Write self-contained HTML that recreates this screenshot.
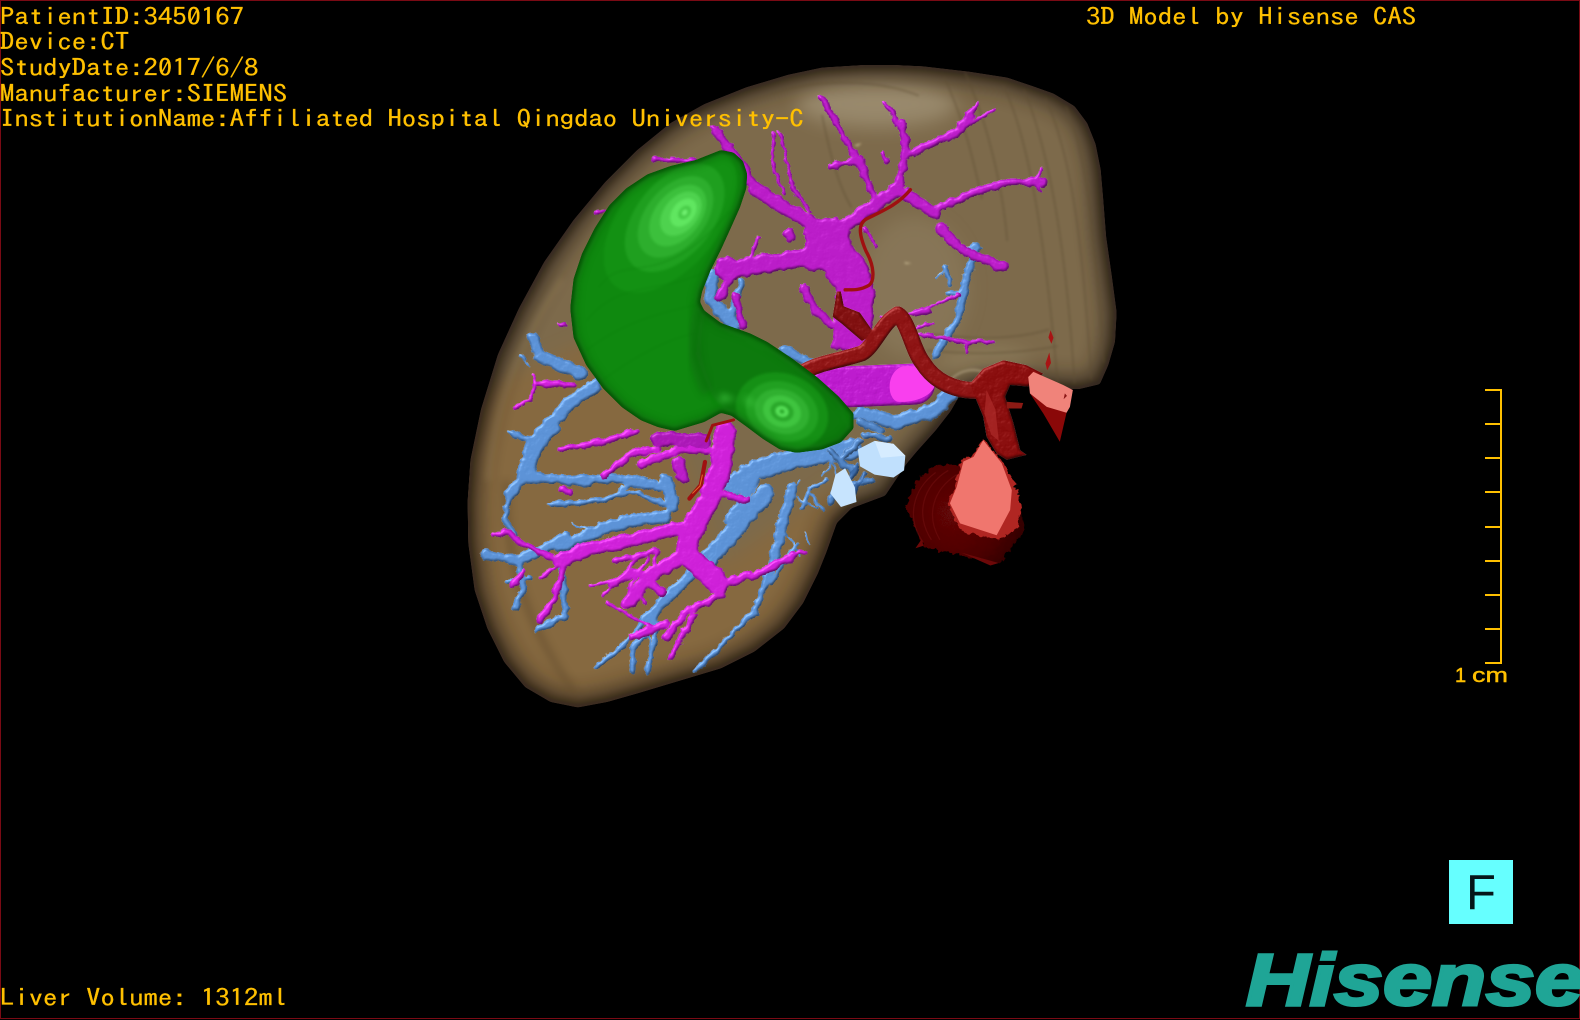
<!DOCTYPE html>
<html><head><meta charset="utf-8"><title>3D Model</title>
<style>
html,body{margin:0;padding:0;background:#000;width:1580px;height:1020px;overflow:hidden}
svg{position:absolute;left:0;top:0}
.t{position:absolute;left:0;white-space:pre;font-family:"IPAGothic","Liberation Mono",monospace;font-size:24px;line-height:26px;color:#ffc000;-webkit-text-stroke:.25px #ffc000;transform-origin:0 0;transform:scaleX(1.196)}
</style></head><body>
<svg width="1580" height="1020" viewBox="0 0 1580 1020" xmlns="http://www.w3.org/2000/svg">
<defs>
<filter id="smooth" x="-5%" y="-5%" width="110%" height="110%" color-interpolation-filters="sRGB">
<feGaussianBlur stdDeviation="3"/><feComponentTransfer><feFuncA type="linear" slope="9" intercept="-4"/></feComponentTransfer>
</filter>
<filter id="b20" x="-40%" y="-40%" width="180%" height="180%"><feGaussianBlur stdDeviation="22"/></filter>
<filter id="b8" x="-40%" y="-40%" width="180%" height="180%"><feGaussianBlur stdDeviation="8"/></filter>
<filter id="b3" x="-40%" y="-40%" width="180%" height="180%"><feGaussianBlur stdDeviation="3"/></filter>
<filter id="rough" x="-10%" y="-10%" width="120%" height="120%"><feTurbulence type="fractalNoise" baseFrequency=".09" numOctaves="2" seed="8"/><feDisplacementMap in="SourceGraphic" scale="16" xChannelSelector="R" yChannelSelector="G"/></filter>
<filter id="tube" filterUnits="userSpaceOnUse" x="0" y="0" width="1568" height="1568" color-interpolation-filters="sRGB">
<feTurbulence type="fractalNoise" baseFrequency=".045" numOctaves="3" seed="4" result="n"/>
<feDisplacementMap in="SourceGraphic" in2="n" scale="16" xChannelSelector="R" yChannelSelector="G" result="d"/>
<feGaussianBlur in="d" stdDeviation="3.5" result="b0"/>
<feComposite in="b0" in2="n" operator="arithmetic" k1=".25" k2=".85" k3="0" k4="0" result="b"/>
<feDiffuseLighting in="b" surfaceScale="5" diffuseConstant="1.1" lighting-color="#fff" result="dl"><feDistantLight azimuth="235" elevation="72"/></feDiffuseLighting>
<feBlend in="d" in2="dl" mode="multiply" result="m"/>
<feSpecularLighting in="b" surfaceScale="5" specularConstant=".5" specularExponent="26" lighting-color="#fff" result="s"><feDistantLight azimuth="235" elevation="36"/></feSpecularLighting>
<feComposite in="m" in2="s" operator="arithmetic" k1="0" k2="1" k3=".5" k4="0" result="a"/>
<feComposite in="a" in2="d" operator="in"/>
</filter>
<filter id="tube2" filterUnits="userSpaceOnUse" x="0" y="0" width="1568" height="1568" color-interpolation-filters="sRGB">
<feTurbulence type="fractalNoise" baseFrequency=".05" numOctaves="3" seed="9" result="n"/>
<feGaussianBlur in="SourceGraphic" stdDeviation="3.5" result="b0"/>
<feComposite in="b0" in2="n" operator="arithmetic" k1=".3" k2=".82" k3="0" k4="0" result="b"/>
<feDiffuseLighting in="b" surfaceScale="5" diffuseConstant="1.1" lighting-color="#fff" result="dl"><feDistantLight azimuth="235" elevation="72"/></feDiffuseLighting>
<feBlend in="SourceGraphic" in2="dl" mode="multiply" result="m"/>
<feSpecularLighting in="b" surfaceScale="5" specularConstant=".5" specularExponent="22" lighting-color="#fff" result="s"><feDistantLight azimuth="235" elevation="36"/></feSpecularLighting>
<feComposite in="m" in2="s" operator="arithmetic" k1="0" k2="1" k3=".5" k4="0" result="a"/>
<feComposite in="a" in2="SourceGraphic" operator="in"/>
</filter>
<path id="lv" d="M960 12L1030 12L1100 15L1210 28L1300 42L1360 62L1410 80L1460 110L1490 150L1510 200L1522 260L1528 330L1535 420L1548 510L1560 600L1556 670L1540 725L1520 770L1470 782L1430 780L1340 770L1240 770L1190 792L1165 835L1130 880L1085 930L1060 960L1010 1035L930 1065L895 1100L870 1170L850 1220L815 1290L770 1350L700 1405L620 1445L520 1475L420 1505L350 1525L280 1538L215 1525L155 1490L105 1430L65 1350L35 1260L20 1150L18 1050L25 950L50 830L90 700L140 590L200 480L270 380L345 290L420 215L500 150L580 105L680 65L780 35L860 18Z"/>
<path id="gb" d="M620 214L650 220L672 240L682 270L680 305L665 350L645 395L620 450L595 500L575 550L570 575L580 595L620 625L690 650L730 670L790 710L850 755L900 800L935 840L935 875L905 908L860 925L800 933L760 925L720 900L680 870L645 845L620 838L580 860L510 881L470 872L430 856L385 825L340 780L300 725L270 660L262 590L270 520L290 460L320 400L355 345L395 305L445 272L500 252L560 238Z"/>
<clipPath id="lvc"><use href="#lv"/></clipPath>
<clipPath id="gbc"><use href="#gb"/></clipPath>
<radialGradient id="ball" gradientUnits="userSpaceOnUse" cx="1170" cy="1075" r="165">
<stop offset="0" stop-color="#620707"/><stop offset=".7" stop-color="#4c0404"/><stop offset="1" stop-color="#360202"/></radialGradient>
</defs>

<g transform="translate(460 60) scale(.42092)">
<!-- liver -->
<g filter="url(#smooth)">
<g clip-path="url(#lvc)">
<rect width="1568" height="1568" fill="#7d6a4b"/>
<path d="M0 800L420 620L620 1200L900 1000L1000 1568L0 1568Z" fill="#866941" filter="url(#b20)"/>
<ellipse cx="990" cy="105" rx="190" ry="55" fill="#a4967a" opacity=".7" filter="url(#b20)"/>
<ellipse cx="1080" cy="540" rx="130" ry="170" fill="#968769" opacity=".4" filter="url(#b20)"/>
<ellipse cx="1250" cy="720" rx="110" ry="40" fill="#9a8a68" opacity=".5" filter="url(#b20)"/>
<use href="#lv" fill="none" stroke="#33281a" stroke-width="60" opacity=".75" filter="url(#b20)"/>
<use href="#lv" fill="none" stroke="#1c150a" stroke-width="16" opacity=".7" filter="url(#b8)"/>
<path d="M66 1000C76 830 134 680 244 520" fill="none" stroke="#9f8860" stroke-width="12" opacity=".35" filter="url(#b8)"/>
<path d="M110 1000C105 1200 170 1360 270 1500" fill="none" stroke="#5f4a2a" stroke-width="20" opacity=".4" filter="url(#b8)"/>
<g fill="none" stroke="#5f4e34" stroke-width="4" opacity=".5">
<path d="M1290 60C1350 180 1390 420 1420 770"/><path d="M1340 70C1400 220 1440 440 1460 770"/>
<path d="M1390 90C1460 240 1480 470 1500 760"/><path d="M1440 110C1500 260 1510 500 1530 720"/>
<path d="M1200 30C1250 140 1290 300 1300 430"/><path d="M740 80C830 50 980 40 1090 85"/>
<path d="M1100 650C1200 660 1300 670 1400 640"/><path d="M1110 690C1210 700 1310 700 1420 680"/>
<path d="M1150 40C1200 150 1220 240 1240 330"/><path d="M860 130C880 230 900 300 930 350"/>
</g>
<path d="M1165 760C1190 735 1225 730 1250 745" fill="none" stroke="#b5a582" stroke-width="4" opacity=".8"/>
<g fill="#c8b890"><path d="M935 203l20-6-10 8zM1055 480l18 3-14 2z" /></g>
</g></g>

<!-- blue vessels -->
<g filter="url(#tube)" fill="none" stroke="#5a90d4" stroke-linecap="round" stroke-linejoin="round">
<g stroke-width="32">
<path d="M190 705L290 745"/><path d="M320 775L260 815L215 870"/>
<path d="M490 1000L505 1060"/><path d="M490 1085L400 1095L310 1125"/>
<path d="M600 510L596 570L650 630"/>
</g>
<g stroke-width="44"><path d="M215 870L172 925L155 985"/><path d="M930 925L800 945L700 975L650 1010" stroke-width="50"/><path d="M725 1030L650 1120L590 1185"/><path d="M950 840L1040 860L1120 835L1170 790" stroke-width="36"/></g>
<g stroke-width="26">
<path d="M175 660L190 705"/><path d="M155 990L118 1030"/><path d="M155 990L290 1000L360 992L470 1012"/>
<path d="M310 1125L235 1160"/><path d="M590 1185L500 1270L440 1330"/>
<path d="M790 1015L770 1085L745 1195"/><path d="M745 1195L700 1310" stroke-width="18"/><path d="M60 1175L140 1190L250 1135"/>
<path d="M670 530L640 610" stroke-width="18"/><path d="M1225 445L1200 530L1185 610L1130 700" stroke-width="20"/>
<path d="M770 690L830 720"/>
</g>
<g stroke-width="13">
<path d="M118 1030L105 1090L130 1130"/><path d="M120 885L170 905"/><path d="M440 1330L390 1390L325 1440"/>
<path d="M700 1310L620 1390L560 1452"/><path d="M460 1340L410 1400L410 1450"/><path d="M470 1340L445 1455"/>
<path d="M140 1195L150 1260L130 1300" stroke-width="18"/><path d="M240 1190L250 1320L185 1352" stroke-width="18"/>
<path d="M1150 490L1165 530M1200 555L1160 555"/><path d="M400 1010L360 1040L300 1050L215 1055"/>
<path d="M500 1060L420 1030L380 1030"/><path d="M720 970L650 1000"/><path d="M700 1000L640 1090" stroke-width="24"/>
<path d="M870 1000L830 1020L815 1065M830 1030L865 1070" stroke-width="8"/><path d="M740 1240L800 1150"/>
<path d="M480 1300L440 1370"/><path d="M120 1240L115 1240L170 1230"/>
</g>
<g stroke-width="5">
<path d="M810 1000L780 1040M800 1040L850 1065M820 1125L830 1150M770 1120L810 1180"/>
<path d="M1130 520L1160 490M1240 445L1205 445"/><path d="M900 930L860 990M880 950L910 1010"/>
<path d="M330 1130L270 1100M440 1330L460 1420"/><path d="M170 730L145 700"/>
</g>
</g>

<!-- magenta vessels upper -->
<g filter="url(#tube)" fill="none" stroke="#b81ac6" stroke-linecap="round" stroke-linejoin="round">
<path d="M825 385L890 380L922 402L925 442L960 482L976 530L976 620L965 660L940 690L890 680L895 620L900 552L870 500L825 490Z" fill="#b81ac6" stroke-width="14"/>
<path d="M860 465L760 480L670 492" stroke-width="46"/>
<g stroke-width="34">
<path d="M905 400L985 345L1040 305"/><path d="M830 385L760 345L700 305"/>
<path d="M1060 320L1130 365" stroke-width="28"/><path d="M1140 395L1190 450L1290 492" stroke-width="24"/>
<path d="M635 495L640 500" stroke-width="55"/>
</g>
<g stroke-width="20">
<path d="M1040 305L1060 215L1050 150"/><path d="M1065 225L1180 172L1222 118"/><path d="M1190 160L1268 122" stroke-width="11"/>
<path d="M1130 355L1220 315L1300 290L1385 290"/><path d="M985 325L945 240L905 170L860 92" stroke-width="16"/>
<path d="M950 240L880 252" stroke-width="17"/><path d="M975 310L950 232" stroke-width="18"/>
<path d="M695 300L680 270L640 210L605 165" stroke-width="24"/>
<path d="M680 500L640 520L620 560" stroke-width="22"/><path d="M670 630L655 560" stroke-width="20"/>
<path d="M815 540L835 580L880 630" stroke-width="22"/><path d="M780 412L785 420" stroke-width="24"/><path d="M1005 222L1015 240" stroke-width="12"/>
<path d="M560 240L460 235" stroke-width="13"/>
</g>
<g stroke-width="9">
<path d="M830 360L790 300L760 170"/><path d="M770 320L745 260L745 175"/><path d="M1040 150L1010 100" stroke-width="12"/>
<path d="M1222 118L1230 105"/><path d="M1365 290L1385 258M1365 290L1378 310"/>
<path d="M1000 610L1075 605L1190 555"/><path d="M1090 650L1190 668L1265 670"/><path d="M1075 640L1120 625M1085 605L1120 595"/><path d="M1205 670L1205 695"/>
<path d="M960 400L990 440"/><path d="M690 470L710 420"/>
<path d="M340 360L325 362"/><path d="M250 628L238 628"/>
</g>
</g>

<!-- magenta vessels lower -->
<g filter="url(#tube)" fill="none" stroke="#cc1ed6" stroke-linecap="round" stroke-linejoin="round">
<g stroke-width="54"><path d="M630 885L622 960L592 1045L552 1110L540 1175"/><path d="M540 1175L615 1245" stroke-width="54"/></g>
<g stroke-width="34">
<path d="M530 1110L420 1138L300 1162L238 1192"/><path d="M540 1175L450 1225L400 1290"/>
<path d="M625 1245L720 1215" stroke-width="22"/>
<path d="M430 960L530 925L590 925" stroke-width="20"/><path d="M470 900L580 905" stroke-width="36" stroke="#a816b4"/>
<path d="M520 960L530 990" stroke-width="34" stroke="#b81ac6"/>
</g>
<g stroke-width="19">
<path d="M238 1192L150 1150L105 1118" stroke-width="14"/><path d="M250 1195L222 1285L190 1330" stroke-width="16"/>
<path d="M730 1210L790 1178"/><path d="M620 1270L540 1310L490 1372"/><path d="M555 1320L500 1420" stroke-width="14"/>
<path d="M345 985L410 935L470 925"/><path d="M180 770L270 770" stroke-width="16"/><path d="M240 925L350 905L420 882" stroke-width="15"/>
<path d="M360 1245L410 1220L470 1225"/><path d="M370 1190L470 1165" stroke-width="14"/>
<path d="M410 1370L490 1340"/><path d="M630 1035L680 1045"/>
<path d="M440 1230L480 1265" stroke-width="22"/>
</g>
<g stroke-width="9">
<path d="M180 770L165 810L130 825"/><path d="M180 770L175 750"/>
<path d="M420 1180L380 1240L340 1270M450 1180L400 1255L440 1290M310 1250L370 1235M470 1170L450 1240"/>
<path d="M80 1130L105 1125"/><path d="M260 1025L245 1020" stroke-width="18"/><path d="M190 1230L250 1195"/><path d="M790 1178L820 1170"/>
<path d="M600 930L640 880"/><path d="M350 1290L440 1340L470 1350"/><path d="M150 1215L125 1250" stroke-width="13"/>
</g>
</g>

<!-- big magenta tube -->
<g filter="url(#tube2)"><path d="M880 778L1080 770" fill="none" stroke="#b817c9" stroke-width="98" stroke-linecap="round"/></g>
<path d="M1050 728C1090 722 1130 740 1130 765C1128 795 1085 815 1040 812C1015 805 1010 745 1050 728Z" fill="#f93fee"/>

<!-- thin arteries -->
<g fill="none" stroke="#9f1010" stroke-linecap="round" stroke-linejoin="round">
<path d="M1070 308C1040 345 1000 360 965 378C945 390 948 415 965 455C985 490 985 525 972 535C950 548 930 546 915 546" stroke-width="8"/>
<path d="M650 855L600 868L585 905" stroke-width="7"/>
<path d="M582 955L572 1010L545 1042" stroke-width="10"/>
</g>
<path d="M576 985L570 1012L552 1030" fill="none" stroke="#e0682a" stroke-width="2.5"/>

<!-- arteries -->
<g filter="url(#tube2)">
<path d="M895 550L885 610L905 625L955 668L985 650L950 600L912 585L905 550Z" fill="#7c0c0c"/>
<path d="M815 742C850 720 900 715 955 697C985 680 1005 620 1040 605" fill="none" stroke="#8a1010" stroke-width="38" stroke-linecap="round"/>
<path d="M1040 605C1065 620 1075 690 1100 720C1125 760 1170 785 1225 785" fill="none" stroke="#8a1010" stroke-width="40" stroke-linecap="round"/>
<path d="M1212 768L1243 733L1291 713L1346 725L1386 745L1350 776L1307 772L1295 800L1315 863L1331 927L1346 938L1299 950L1275 935L1251 895L1243 847L1220 792Z" fill="#860a0a"/>
</g>
<path d="M1251 784L1272 830L1280 905L1262 890L1246 840Z" fill="#ab2a28" opacity=".75"/>
<path d="M1354 792L1441 838L1425 907L1386 840Z" fill="#8a0808"/>
<path d="M1350 753L1362 741L1433 772L1456 784L1449 824L1441 838L1394 824L1354 792Z" fill="#f0837a"/>
<path d="M1437 792l5 6-8 8z" fill="#8a1616"/>
<path d="M1299 812L1338 815L1334 828L1299 828Z" fill="#8c1a14"/>
<path d="M1403 642l7 18-5 14-7-15zM1400 695l4 25-9 17-4-16z" fill="#a81414"/>

<!-- spherical sac -->
<path d="M1060 1061L1085 1000L1133 962L1195 960L1330 1040L1340 1120L1283 1196L1200 1180L1101 1156Z" fill="url(#ball)" filter="url(#rough)"/>
<g fill="none" stroke="#721010" stroke-width="3" opacity=".55">
<path d="M1160 975C1100 1010 1080 1080 1120 1140"/><path d="M1180 985C1125 1020 1105 1080 1140 1140"/><path d="M1130 980C1075 1020 1060 1090 1100 1145"/>
</g>
<path d="M1082 1160l15-22 4 16zM1190 1170l90 25-20 6z" fill="#6c0808"/>
<path d="M1243 900L1287 950L1320 1010L1335 1060L1326 1110L1280 1140L1190 1120L1158 1053L1176 1010L1192 950L1220 938Z" fill="#b02622" filter="url(#rough)"/>
<path d="M1243 903L1287 958L1311 1022L1307 1069L1275 1129L1188 1101L1164 1053L1180 1014L1196 954L1220 943Z" fill="#f0766e"/>

<!-- gallbladder (green) -->
<g filter="url(#smooth)"><g clip-path="url(#gbc)">
<rect width="1568" height="1568" fill="#0f890f"/>
<path d="M575 590L640 640L760 700L900 800L950 940L700 900L600 800L560 700Z" fill="#0b7a0b" filter="url(#b8)"/>
<g transform="rotate(40 510 375)">
<ellipse cx="505" cy="385" rx="115" ry="205" fill="#139113"/>
<ellipse cx="510" cy="375" rx="90" ry="150" fill="#1f9f1f"/>
<ellipse cx="510" cy="372" rx="70" ry="112" fill="#2dae2d"/>
<ellipse cx="512" cy="366" rx="54" ry="84" fill="#3cc03c"/>
<ellipse cx="515" cy="358" rx="40" ry="60" fill="#4ed24e"/>
<ellipse cx="518" cy="352" rx="26" ry="38" fill="#60e660"/>
<ellipse cx="520" cy="350" rx="13" ry="18" fill="#48cc48"/>
<ellipse cx="520" cy="350" rx="6" ry="8" fill="#70f070"/>
</g>
<g transform="rotate(20 765 835)">
<ellipse cx="765" cy="835" rx="112" ry="90" fill="#159015"/>
<ellipse cx="765" cy="835" rx="88" ry="70" fill="#21a021"/>
<ellipse cx="765" cy="835" rx="66" ry="52" fill="#30b030"/>
<ellipse cx="765" cy="835" rx="46" ry="37" fill="#3fc43f"/>
<ellipse cx="765" cy="835" rx="28" ry="23" fill="#2aa82a"/>
<ellipse cx="765" cy="835" rx="16" ry="13" fill="#58e058"/>
<ellipse cx="765" cy="835" rx="6" ry="5" fill="#2aa82a"/>
</g>
<path d="M620 790l36 16-40 10zM675 795l38 28-34-6z" fill="#43c743" opacity=".7" filter="url(#b8)"/>
<g fill="none" stroke="#0b7d0b" stroke-width="2" opacity=".55">
<path d="M330 540C390 450 470 560 640 360"/><path d="M300 620C380 520 470 560 590 500"/><path d="M300 690C390 620 480 600 570 580"/><path d="M340 760C420 700 500 660 560 650"/>
</g>
<use href="#gb" fill="none" stroke="#0a660a" stroke-width="30" opacity=".5" filter="url(#b8)"/>
<use href="#gb" fill="none" stroke="#053f05" stroke-width="10" opacity=".8" filter="url(#b3)"/>
<path d="M570 590C550 660 550 720 590 790" fill="none" stroke="#0a620a" stroke-width="30" opacity=".45" filter="url(#b8)"/>
</g></g>

<!-- light blue blobs -->
<g filter="url(#tube)" fill="none" stroke="#4f82c2" stroke-linecap="round">
<path d="M880 930L930 975M905 950L950 905M960 890L1020 900M930 1010L980 1000M880 1050L900 1000M950 860L1000 880" stroke-width="16"/>
<path d="M945 965L900 1030M960 985L925 1040" stroke-width="12" stroke="#3b6aa8"/>
</g>
<path d="M945 925L985 905L1030 912L1058 940L1055 975L1030 992L985 985L950 965Z" fill="#c0e0fd"/>
<path d="M985 905L1030 912L1058 940L1000 945Z" fill="#d6ecff"/>
<path d="M880 1030L892 985L915 970L938 1015L942 1050L905 1062Z" fill="#c7e4fe"/>
</g>

<!-- frame -->
<rect x=".5" y=".5" width="1579" height="1018" fill="none" stroke="#7a0a14"/>

<!-- scale ruler -->
<g stroke="#ffc000" stroke-width="2" fill="none">
<path d="M1501 390V664"/>
<path d="M1485 390H1502M1485 424H1501M1485 458H1501M1485 492H1501M1485 527H1501M1485 561H1501M1485 595H1501M1485 629H1501M1485 663H1502"/>
</g>
<text x="1455" y="682" font-family="Liberation Sans" font-size="20" fill="#ffc000" stroke="#ffc000" stroke-width=".5">1</text>
<text x="1472" y="682" font-family="Liberation Sans" font-size="20" fill="#ffc000" stroke="#ffc000" stroke-width=".4" textLength="36" lengthAdjust="spacingAndGlyphs">cm</text>

<!-- F box -->
<rect x="1449" y="860" width="64" height="64" fill="#66ffff"/>
<text x="1466" y="909" font-family="Liberation Sans" font-size="49" fill="#05161a">F</text>

<!-- Hisense logo -->
<text x="1246" y="1005" font-family="Liberation Sans" font-weight="700" font-style="italic" font-size="73" fill="#1fa596" stroke="#1fa596" stroke-width="3" textLength="338" lengthAdjust="spacingAndGlyphs">Hisense</text>
</svg>

<div class="t" style="top:3px">PatientID:3450167</div>
<div class="t" style="top:28px">Device:CT</div>
<div class="t" style="top:54px">StudyDate:2017/6/8</div>
<div class="t" style="top:80px">Manufacturer:SIEMENS</div>
<div class="t" style="top:105px">InstitutionName:Affiliated Hospital Qingdao University-C</div>
<div class="t" style="top:3px;left:1086px">3D Model by Hisense CAS</div>
<div class="t" style="top:984px">Liver Volume: 1312ml</div>
</body></html>
